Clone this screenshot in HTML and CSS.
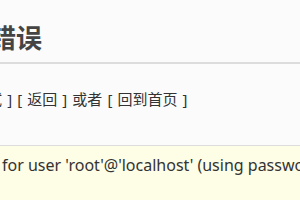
FILE: index.html
```html
<!DOCTYPE html>
<html lang="zh">
<head>
<meta charset="utf-8">
<link rel="stylesheet" href="styles.css">
<title>错误</title>
</head>
<body>
<div class="page">
  <h1 class="title">错误</h1>
  <div class="actions">[ 重试 ] [ 返回 ] 或者 [ 回到首页 ]</div>
  <div class="message">Access denied for user 'root'@'localhost' (using password: YES)</div>
</div>
</body>
</html>
```
FILE: styles.css
```css
html, body {
  margin: 0;
  padding: 0;
  background: #fbfbfb;
  overflow: hidden;
}
.page {
  width: 700px;
  font-family: "Noto Sans", "Noto Sans CJK SC", sans-serif;
  color: #333;
}
.title {
  margin: 0;
  padding: 23px 0 9px 0;
  text-indent: -10px;
  font-size: 26px;
  line-height: 30px;
  font-weight: bold;
  color: #444;
  border-bottom: 2px solid #dcdcdc;
}
.actions {
  padding: 25px 0 0 0;
  height: 56px;
  font-size: 15px;
  line-height: 20px;
  white-space: nowrap;
  text-indent: -38px;
  word-spacing: 1.2px;
}
.message {
  border-top: 1px solid #dddddd;
  background: #fefde6;
  padding: 9px 0 0 0;
  height: 60px;
  font-size: 16px;
  line-height: 20px;
  white-space: nowrap;
  text-indent: -108px;
}
```
